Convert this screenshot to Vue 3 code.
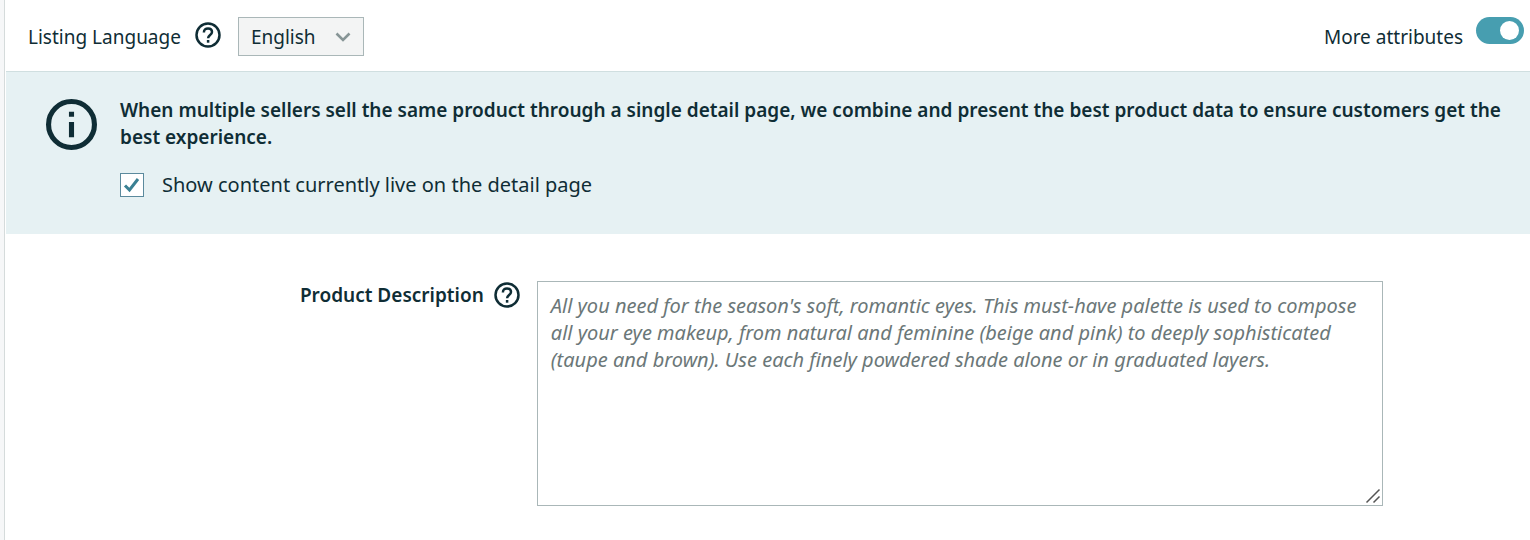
<script setup>
import { ref } from 'vue'

const language = ref('English')
const moreAttributes = ref(true)
const showLive = ref(true)
const description = ref('')
const liveDescription =
  "All you need for the season's soft, romantic eyes. This must-have palette is used to compose all your eye makeup, from natural and feminine (beige and pink) to deeply sophisticated (taupe and brown). Use each finely powdered shade alone or in graduated layers."
</script>

<template>
  <main class="page">
    <header class="toolbar">
      <div class="group">
        <label for="language">Listing Language</label>
        <button class="help" type="button" aria-label="Help with listing language">
          <svg viewBox="0 0 26 26" aria-hidden="true">
            <circle cx="13" cy="13" r="11.5" />
            <path d="M8.9 10.4C8.9 7.900 10.600 6.400 13 6.400s4 1.500 4 3.700c0 2.900-3.900 3.100-3.900 6.200" />
            <path d="M13.1 18v2.7" />
          </svg>
        </button>
        <div class="select">
          <select id="language" v-model="language">
            <option>English</option>
          </select>
          <svg viewBox="0 0 16 10" aria-hidden="true"><path d="M1.5 1.5 8 8l6.5-6.5" /></svg>
        </div>
      </div>
      <label class="group switch">
        <span>More attributes</span>
        <input v-model="moreAttributes" type="checkbox" role="switch" />
      </label>
    </header>

    <section class="notice">
      <svg class="info" viewBox="0 0 50 50" aria-hidden="true">
        <circle cx="25" cy="25" r="22.5" />
        <path d="M25 12.500v5M25 22.500v15" />
      </svg>
      <div class="message">
        <p>
          When multiple sellers sell the same product through a single detail page, we combine and
          present the best product data to ensure customers get the best experience.
        </p>
        <label class="live">
          <span class="check">
            <input v-model="showLive" type="checkbox" />
            <svg v-if="showLive" viewBox="0 0 24 24" aria-hidden="true">
              <path d="m5 12.500 4.500 4.500L18 6" />
            </svg>
          </span>
          <span>Show content currently live on the detail page</span>
        </label>
      </div>
    </section>

    <section class="field">
      <div class="caption">
        <label for="description">Product Description</label>
        <button class="help" type="button" aria-label="Help with product description">
          <svg viewBox="0 0 26 26" aria-hidden="true">
            <circle cx="13" cy="13" r="11.5" />
            <path d="M8.9 10.4C8.9 7.900 10.600 6.400 13 6.400s4 1.500 4 3.700c0 2.900-3.900 3.100-3.900 6.200" />
            <path d="M13.1 18v2.7" />
          </svg>
        </button>
      </div>
      <div class="editor">
        <textarea id="description" v-model="description" :placeholder="liveDescription"></textarea>
        <svg viewBox="0 0 16 16" aria-hidden="true"><path d="M1.5 14.5 14.5 1.5M8.5 14.5l6-6" /></svg>
      </div>
    </section>
  </main>
</template>

<style>
body {
  background: #f6f7f8;
}
</style>

<style scoped>
.page {
  box-sizing: border-box;
  min-height: 100vh;
  margin-left: 4px;
  border-left: 1px solid #d5dbdb;
  padding-left: 1px;
  background: #fff;
  color: #0f2d35;
  font: 19px/27px "Noto Sans", "Open Sans", sans-serif;
}
svg {
  display: block;
  fill: none;
  stroke: currentColor;
}
.toolbar {
  display: flex;
  justify-content: space-between;
  padding: 17px 6px 14px 22px;
  border-bottom: 1px solid #d0dfe0;
}
.group {
  display: flex;
  align-items: flex-start;
}
.toolbar label {
  line-height: 40px;
}
.help {
  flex: none;
  width: 26px;
  height: 26px;
  padding: 0;
  border: 0;
  background: none;
  color: inherit;
  stroke-width: 2.5;
}
.toolbar .help {
  margin: 5px 17px 0 14px;
}
.select {
  position: relative;
}
select {
  box-sizing: border-box;
  display: block;
  width: 126px;
  height: 39px;
  padding: 2px 12px 0;
  border: 1px solid #aab7b8;
  border-radius: 0;
  appearance: none;
  background: #f3f4f4;
  color: inherit;
  font: inherit;
}
.select svg {
  position: absolute;
  top: 15px;
  right: 13px;
  width: 16px;
  height: 10px;
  color: #879596;
  stroke-width: 2.6;
  pointer-events: none;
}
.switch {
  gap: 13px;
}
.switch input {
  box-sizing: border-box;
  width: 48px;
  height: 27px;
  margin: 0;
  padding: 4px 5px;
  border-radius: 14px;
  appearance: none;
  background: #879596;
}
.switch input::before {
  content: "";
  display: block;
  width: 19px;
  height: 19px;
  border-radius: 50%;
  background: #fff;
}
.switch input:checked {
  background: #479eb0;
}
.switch input:checked::before {
  margin-left: auto;
}
.notice {
  display: flex;
  gap: 23px;
  padding: 25px 20px 36px 40px;
  background: #e6f1f3;
}
.info {
  flex: none;
  width: 51px;
  height: 51px;
  margin-top: 2px;
  stroke-width: 5;
}
.message p {
  margin: 0 0 20px;
  font-weight: 600;
}
.live {
  display: flex;
  align-items: center;
  gap: 18px;
  font-size: 20px;
}
.check {
  position: relative;
}
.check input {
  box-sizing: border-box;
  display: block;
  width: 24px;
  height: 24px;
  margin: 0;
  border: 1px solid #5b8a9d;
  appearance: none;
  background: #fff;
}
.check svg {
  position: absolute;
  inset: 0;
  color: #3a8093;
  stroke-width: 3;
  pointer-events: none;
}
.field {
  display: grid;
  grid-template-columns: 34fr 56fr;
  column-gap: 17px;
  padding: 47px 147px 34px 0;
}
.caption {
  display: flex;
  justify-content: flex-end;
  gap: 10px;
  padding-top: 1px;
  font-weight: 600;
}
.editor {
  position: relative;
}
textarea {
  box-sizing: border-box;
  display: block;
  width: 100%;
  height: 225px;
  padding: 10px 13px;
  border: 1px solid #aab7b8;
  resize: none;
  color: inherit;
  font: inherit;
  font-size: 20px;
}
textarea::placeholder {
  color: #6b7778;
  font-style: italic;
}
.editor svg {
  position: absolute;
  right: 2px;
  bottom: 2px;
  width: 16px;
  height: 16px;
  color: #555;
  stroke-width: 1.5;
  pointer-events: none;
}
</style>
